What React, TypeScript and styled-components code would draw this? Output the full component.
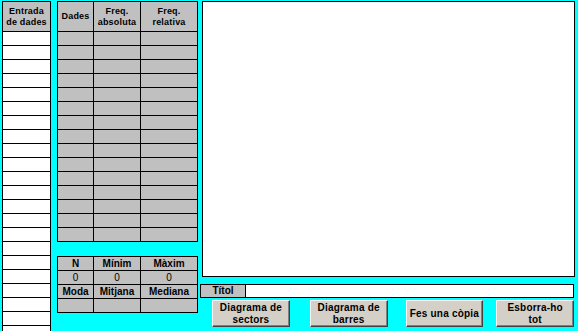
import React from "react";
import styled, { createGlobalStyle } from "styled-components";

const GlobalStyle = createGlobalStyle`
  html, body {
    margin: 0;
    padding: 0;
    background: #00ffff;
  }
  body {
    font-family: "Liberation Sans", Arial, sans-serif;
  }
`;

const ENTRY_ROWS = 22;
const FREQ_ROWS = 15;

const App = () => {
  return (
    <>
      <GlobalStyle />
      <Screen>
        <EntryColumn>
          <EntryHeader>
            Entrada
            <br />
            de dades
          </EntryHeader>
          {Array.from({ length: ENTRY_ROWS }).map((_, i) => (
            <EntryCell key={i} />
          ))}
        </EntryColumn>

        <MiddleColumn>
          <DataGrid>
            <HeadCell>Dades</HeadCell>
            <HeadCell>
              Freq.
              <br />
              absoluta
            </HeadCell>
            <HeadCell>
              Freq.
              <br />
              relativa
            </HeadCell>
            {Array.from({ length: FREQ_ROWS * 3 }).map((_, i) => (
              <GrayCell key={i} />
            ))}
          </DataGrid>

          <DataGrid>
            <StatLabel>N</StatLabel>
            <StatLabel>Mínim</StatLabel>
            <StatLabel>Màxim</StatLabel>
            <StatValue>0</StatValue>
            <StatValue>0</StatValue>
            <StatValue>0</StatValue>
            <StatLabel>Moda</StatLabel>
            <StatLabel>Mitjana</StatLabel>
            <StatLabel>Mediana</StatLabel>
            <StatValue />
            <StatValue />
            <StatValue />
          </DataGrid>
        </MiddleColumn>

        <RightColumn>
          <ChartArea />
          <TitleRow>
            <TitleLabel>Títol</TitleLabel>
            <TitleInput />
          </TitleRow>
          <ButtonRow>
            <ActionButton $offset={12}>
              Diagrama de
              <br />
              sectors
            </ActionButton>
            <ActionButton $offset={20}>
              Diagrama de
              <br />
              barres
            </ActionButton>
            <ActionButton $offset={18}>Fes una còpia</ActionButton>
            <ActionButton $offset={13}>
              Esborra-ho
              <br />
              tot
            </ActionButton>
          </ButtonRow>
        </RightColumn>
      </Screen>
    </>
  );
};

export default App;

const Screen = styled.div`
  width: 578px;
  height: 331px;
  overflow: hidden;
  background: #00ffff;
  display: flex;
  align-items: flex-start;
  padding: 1px 0 0 2px;
  box-sizing: border-box;
`;

const EntryColumn = styled.div`
  width: 49px;
  display: grid;
  grid-template-columns: 1fr;
  grid-auto-rows: 13px;
  grid-template-rows: 29px;
  gap: 1px;
  padding: 1px;
  background: #000;
  box-sizing: border-box;
`;

const EntryHeader = styled.div`
  background: #c0c0c0;
  font-size: 9px;
  font-weight: bold;
  line-height: 11px;
  letter-spacing: 0.2px;
  text-align: center;
  display: flex;
  align-items: center;
  justify-content: center;
`;

const EntryCell = styled.div`
  background: #fff;
`;

const MiddleColumn = styled.div`
  margin-left: 6px;
  width: 141px;
  display: flex;
  flex-direction: column;
  gap: 14px;
`;

const DataGrid = styled.div`
  display: grid;
  grid-template-columns: 35px 46px 56px;
  grid-auto-rows: 13px;
  gap: 1px;
  padding: 1px;
  background: #000;
  &:first-child {
    grid-template-rows: 29px;
  }
`;

const HeadCell = styled.div`
  background: #c0c0c0;
  font-size: 9px;
  font-weight: bold;
  line-height: 11px;
  letter-spacing: 0.2px;
  text-align: center;
  display: flex;
  align-items: center;
  justify-content: center;
`;

const GrayCell = styled.div`
  background: #c0c0c0;
`;

const StatLabel = styled.div`
  background: #c0c0c0;
  font-size: 10px;
  font-weight: bold;
  line-height: 13px;
  text-align: center;
`;

const StatValue = styled.div`
  background: #c0c0c0;
  font-size: 10px;
  line-height: 13px;
  text-align: center;
`;

const RightColumn = styled.div`
  margin-left: 2px;
  width: 374px;
  display: flex;
  flex-direction: column;
`;

const ChartArea = styled.div`
  margin-left: 2px;
  width: 373px;
  height: 276px;
  background: #fff;
  border: 1px solid #000;
  box-sizing: border-box;
`;

const TitleRow = styled.div`
  margin-top: 7px;
  width: 374px;
  height: 14px;
  display: flex;
  border: 1px solid #000;
  box-sizing: border-box;
  background: #000;
  gap: 1px;
`;

const TitleLabel = styled.div`
  width: 44px;
  background: #c0c0c0;
  font-size: 10px;
  font-weight: bold;
  line-height: 12px;
  text-align: center;
`;

const TitleInput = styled.div`
  flex: 1;
  background: #fff;
`;

const ButtonRow = styled.div`
  margin-top: 2px;
  display: flex;
`;

const ActionButton = styled.div<{ $offset: number }>`
  margin-left: ${(p) => p.$offset}px;
  width: 78px;
  height: 27px;
  box-sizing: border-box;
  background: #d4d0c8;
  border-top: 1px solid #fff;
  border-left: 1px solid #fff;
  border-right: 1px solid #404040;
  border-bottom: 1px solid #404040;
  box-shadow: inset -1px -1px 0 #808080;
  font-size: 10px;
  font-weight: bold;
  line-height: 12px;
  letter-spacing: 0.2px;
  text-align: center;
  display: flex;
  align-items: center;
  justify-content: center;
`;
